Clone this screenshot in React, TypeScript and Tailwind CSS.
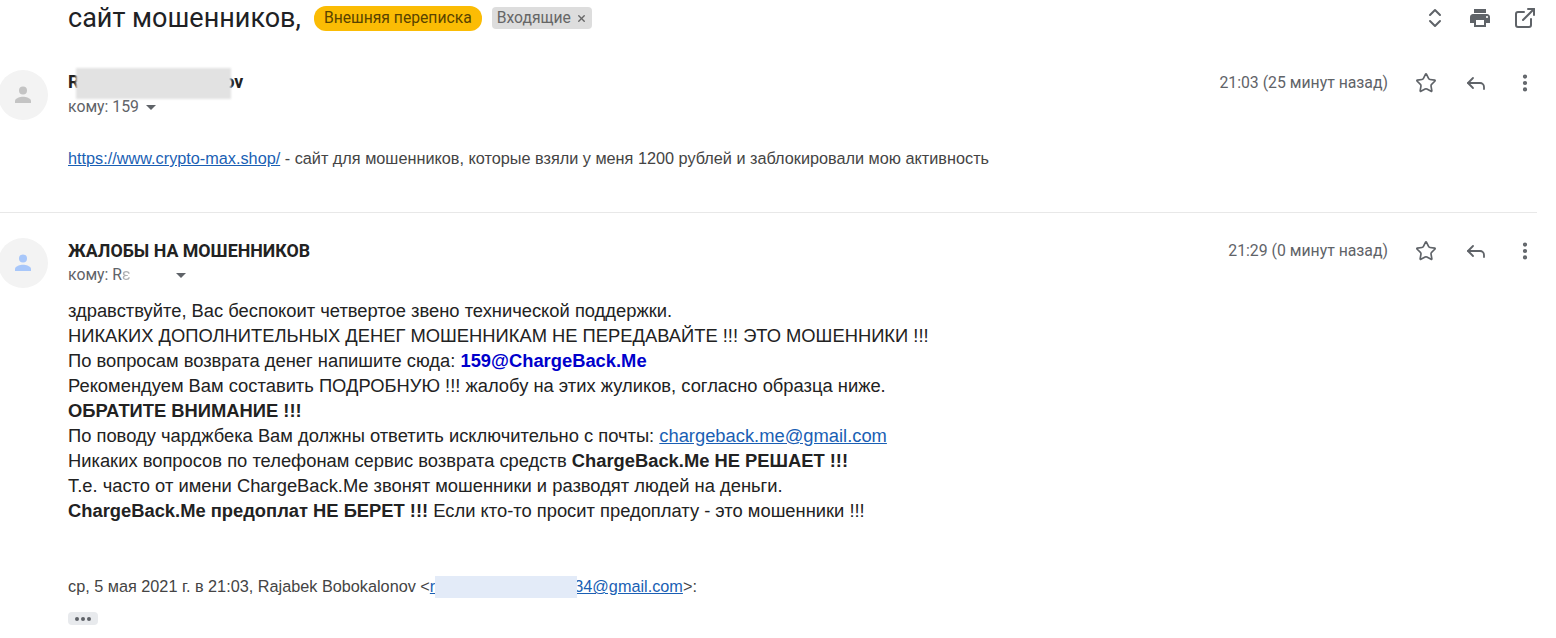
import { Star, Reply, MoreVertical, ChevronsUpDown, ExternalLink, X } from 'lucide-react'

const Avatar = ({ color }: { color: string }) => (
  <div className="w-[50px] h-[50px] rounded-full bg-[#f3f3f3] flex items-center justify-center shrink-0 -ml-[2px]">
    <svg width="24" height="24" viewBox="0 0 24 24" fill={color}>
      <circle cx="12" cy="7.500" r="4" />
      <path d="M4 20v-2c0-2.800 5.300-4.200 8-4.200s8 1.400 8 4.200v2z" />
    </svg>
  </div>
)

const MessageActions = ({ time }: { time: string }) => (
  <div className="flex items-center text-[#5f6368] ml-auto">
    <span className="text-[15.8px] font-['Roboto',sans-serif] mr-[27px]">{time}</span>
    <Star size={22} strokeWidth={1.8} className="mr-[27px]" />
    <Reply size={24} strokeWidth={1.8} className="mr-[26px]" />
    <MoreVertical size={22} strokeWidth={2.6} className="mr-[1px]" />
  </div>
)

export default function App() {
  return (
    <div className="w-[1556px] h-[638px] overflow-hidden bg-white font-['Liberation_Sans',sans-serif] text-[18.35px] text-[#222222]">
      {/* subject */}
      <div className="flex items-center h-[36px] pl-[68px] pr-[19px]">
        <h1 className="text-[27px] font-['Roboto',sans-serif] text-[#202124] whitespace-nowrap">сайт мошенников,</h1>
        <span className="ml-[13px] h-[25px] px-[10px] flex items-center rounded-[12px] bg-[#fbbc04] text-[#594300] text-[15.7px] font-['Roboto',sans-serif] whitespace-nowrap">Внешняя переписка</span>
        <span className="ml-[10px] h-[22px] px-[5px] flex items-center gap-[5px] rounded-[4px] bg-[#dddddd] text-[#666666] text-[15.7px] font-['Roboto',sans-serif]">
          Входящие <X size={11} strokeWidth={3} />
        </span>
        <div className="ml-auto flex items-center gap-[21px] text-[#5f6368]">
          <ChevronsUpDown size={24} strokeWidth={2} />
          <svg width="24" height="24" viewBox="0 0 24 24" fill="#5f6368">
            <path d="M19 8H5c-1.660 0-3 1.340-3 3v6h4v4h12v-4h4v-6c0-1.660-1.340-3-3-3zm-3 11H8v-5h8v5zm3-7c-.550 0-1-.450-1-1s.450-1 1-1 1 .450 1 1-.450 1-1 1zm-1-9H6v4h12V3z" />
          </svg>
          <ExternalLink size={24} strokeWidth={2} />
        </div>
      </div>

      {/* first message */}
      <div className="relative flex pt-[34px] h-[177px] border-b border-[#e8e8e8] w-[1537px]">
        <div className="flex flex-col w-full">
          <div className="flex">
            <Avatar color="#c4c4c4" />
            <div className="ml-[20px] flex-1">
              <div className="flex items-center h-[25px]">
                <span className="font-['Roboto',sans-serif] font-bold text-[17.8px] text-[#222222]">R</span>
                <span className="ml-[145px] font-['Roboto',sans-serif] font-bold text-[17.8px] text-[#222222]">ov</span>
                <MessageActions time="21:03 (25 минут назад)" />
              </div>
              <div className="flex items-center h-[24px] text-[15.8px] text-[#5f6368] font-['Roboto',sans-serif]">
                кому: 159
                <span className="ml-[7px] w-0 h-0 border-x-[5px] border-x-transparent border-t-[5px] border-t-[#5f6368]" />
              </div>
            </div>
          </div>
          <p className="ml-[68px] mt-[26px] text-[16.25px] text-[#444444] whitespace-nowrap">
            <a className="text-[#1a5fb4] underline">https://www.crypto-max.shop/</a> - сайт для мошенников, которые взяли у меня 1200 рублей и заблокировали мою активность
          </p>
        </div>
        <div className="absolute left-[76px] top-[32px] w-[155px] h-[31px] bg-[#e2e2e2] blur-[1px]" />
      </div>

      {/* second message */}
      <div className="flex pt-[25px] w-[1537px]">
        <div className="flex flex-col w-full">
          <div className="flex">
            <Avatar color="#a8c7fa" />
            <div className="ml-[20px] flex-1">
              <div className="flex items-center h-[25px]">
                <span className="font-['Roboto',sans-serif] font-bold text-[17.8px] text-[#222222] translate-y-[1px]">ЖАЛОБЫ НА МОШЕННИКОВ</span>
                <MessageActions time="21:29 (0 минут назад)" />
              </div>
              <div className="flex items-center h-[24px] text-[15.8px] text-[#5f6368] font-['Roboto',sans-serif]">
                кому: R<span className="opacity-50">ε</span>
                <span className="ml-[45px] w-0 h-0 border-x-[5px] border-x-transparent border-t-[5px] border-t-[#5f6368]" />
              </div>
            </div>
          </div>
          <div className="ml-[68px] mt-[10px] leading-[25px] whitespace-nowrap">
            <p>здравствуйте, Вас беспокоит четвертое звено технической поддержки.</p>
            <p>НИКАКИХ ДОПОЛНИТЕЛЬНЫХ ДЕНЕГ МОШЕННИКАМ НЕ ПЕРЕДАВАЙТЕ !!! ЭТО МОШЕННИКИ !!!</p>
            <p>По вопросам возврата денег напишите сюда: <b className="text-[#0000cc]">159@ChargeBack.Me</b></p>
            <p>Рекомендуем Вам составить ПОДРОБНУЮ !!! жалобу на этих жуликов, согласно образца ниже.</p>
            <p><b>ОБРАТИТЕ ВНИМАНИЕ !!!</b></p>
            <p>По поводу чарджбека Вам должны ответить исключительно с почты: <a className="text-[#1a5fb4] underline">chargeback.me@gmail.com</a></p>
            <p>Никаких вопросов по телефонам сервис возврата средств <b>ChargeBack.Me НЕ РЕШАЕТ !!!</b></p>
            <p>Т.е. часто от имени ChargeBack.Me звонят мошенники и разводят людей на деньги.</p>
            <p><b>ChargeBack.Me предоплат НЕ БЕРЕТ !!!</b> Если кто-то просит предоплату - это мошенники !!!</p>
          </div>
          <div className="ml-[68px] mt-[51px] text-[16.25px] text-[#444444] flex items-center whitespace-nowrap h-[25px]">
            ср, 5 мая 2021 г. в 21:03, Rajabek Bobokalonov &lt;<a className="text-[#1a5fb4] underline">r</a>
            <span className="relative z-10 w-[142px] h-[22px] bg-[#e3ebf8]" />
            <a className="-ml-[3px] text-[#1a5fb4] underline">34@gmail.com</a>&gt;:
          </div>
          <div className="ml-[68px] mt-[13px] w-[30px] h-[13px] rounded-[4px] bg-[#e8eaed] flex items-center justify-center gap-[2px]">
            <i className="w-[4px] h-[4px] rounded-full bg-[#5f6368]" />
            <i className="w-[4px] h-[4px] rounded-full bg-[#5f6368]" />
            <i className="w-[4px] h-[4px] rounded-full bg-[#5f6368]" />
          </div>
        </div>
      </div>
    </div>
  )
}
